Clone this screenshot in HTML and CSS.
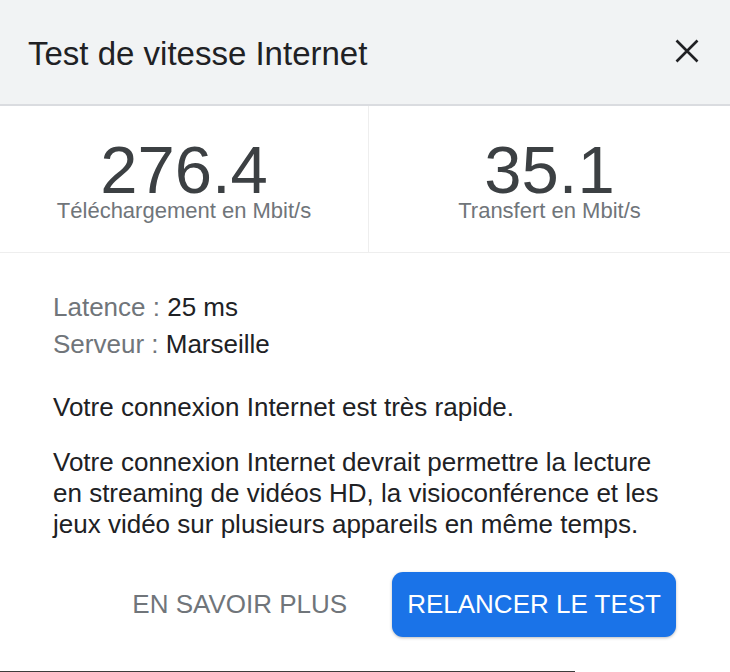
FILE: index.html
```html
<!DOCTYPE html>
<html lang="fr">
<head>
<meta charset="utf-8">
<title>Test de vitesse Internet</title>
<link rel="stylesheet" href="styles.css">
</head>
<body>
<div class="dialog">
  <header class="header">
    <h1 class="title">Test de vitesse Internet</h1>
    <button class="close" aria-label="Fermer">
      <svg width="24" height="24" viewBox="0 0 24 24"><path d="M1.5 1.5 L22.5 22.5 M22.5 1.5 L1.5 22.5" stroke="#202124" stroke-width="2.6" fill="none"/></svg>
    </button>
  </header>
  <section class="stats">
    <div class="stat">
      <div class="stat-value">276.4</div>
      <div class="stat-label">Téléchargement en Mbit/s</div>
    </div>
    <div class="stat">
      <div class="stat-value">35.1</div>
      <div class="stat-label">Transfert en Mbit/s</div>
    </div>
  </section>
  <section class="content">
    <div class="meta">
      <div class="meta-row"><span class="meta-key">Latence : </span>25 ms</div>
      <div class="meta-row"><span class="meta-key">Serveur : </span>Marseille</div>
    </div>
    <p class="para first">Votre connexion Internet est très rapide.</p>
    <p class="para">Votre connexion Internet devrait permettre la lecture en streaming de vidéos HD, la visioconférence et les jeux vidéo sur plusieurs appareils en même temps.</p>
  </section>
  <div class="actions">
    <button class="btn-text">EN SAVOIR PLUS</button>
    <button class="btn-primary">RELANCER LE TEST</button>
  </div>
  <div class="edge"></div>
</div>
</body>
</html>
```

FILE: styles.css
```css
* { box-sizing: border-box; }
html, body {
  margin: 0;
  padding: 0;
  background: #ffffff;
}
body {
  font-family: "Liberation Sans", Arial, sans-serif;
  color: #202124;
  width: 730px;
  height: 672px;
  overflow: hidden;
}
.header {
  height: 106px;
  background: #f1f3f4;
  border-bottom: 2px solid #dadce0;
  display: flex;
  align-items: center;
  justify-content: space-between;
  padding: 4px 31px 0 28px;
}
.title {
  margin: 0;
  font-size: 33px;
  font-weight: normal;
  line-height: 38px;
  color: #202124;
}
.close {
  border: 0;
  background: transparent;
  padding: 0;
  width: 24px;
  height: 24px;
  margin-top: -6px;
  display: block;
}
.close svg { display: block; }
.stats {
  display: grid;
  grid-template-columns: 368px 1fr;
  border-bottom: 1px solid #eeeeee;
}
.stat {
  text-align: center;
  padding: 34px 0 29px;
}
.stat + .stat {
  border-left: 1px solid #eeeeee;
}
.stat-value {
  font-size: 67px;
  line-height: 59px;
  color: #3c4043;
}
.stat-label {
  font-size: 22px;
  line-height: 24px;
  color: #70757a;
}
.content {
  padding: 36px 53px 0;
}
.meta-row {
  font-size: 26px;
  line-height: 37px;
  color: #202124;
}
.meta-key {
  color: #70757a;
}
.para {
  margin: 0;
  font-size: 26px;
  line-height: 31px;
  color: #202124;
}
.para.first {
  margin: 29px 0 24px;
}
.actions {
  display: flex;
  justify-content: flex-end;
  align-items: center;
  gap: 45px;
  padding: 0 54px 0 0;
  margin-top: 32px;
}
.btn-text {
  border: 0;
  background: transparent;
  font-family: inherit;
  font-size: 26px;
  color: #70757a;
  padding: 0;
  line-height: 65px;
}
.btn-primary {
  border: 0;
  background: #1a73e8;
  color: #ffffff;
  font-family: inherit;
  font-size: 26px;
  line-height: 65px;
  height: 65px;
  padding: 0 15px;
  border-radius: 11px;
  box-shadow: 0 1px 3px rgba(60, 64, 67, 0.35);
}
.edge {
  margin-top: 34px;
  width: 575px;
  height: 1px;
  background: #3c3c3c;
}
```
